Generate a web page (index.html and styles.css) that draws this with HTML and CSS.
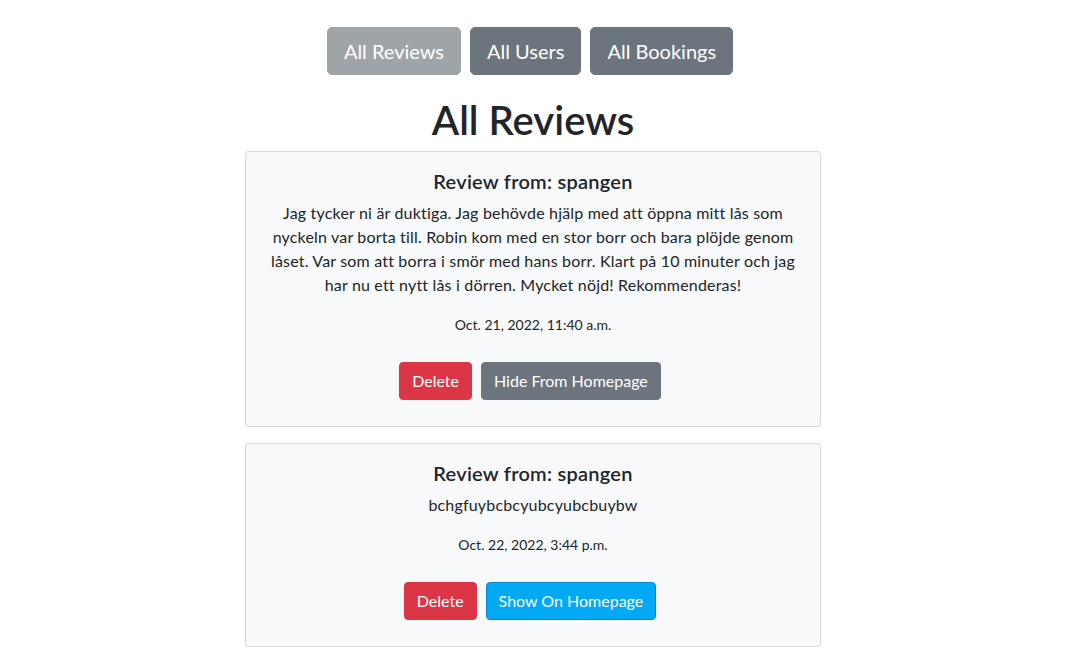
FILE: index.html
```html
<!DOCTYPE html>
<html lang="sv">
<head>
<meta charset="utf-8">
<title>All Reviews</title>
<link rel="stylesheet" href="styles.css">
</head>
<body>
<div class="page">
  <nav class="nav">
    <a class="btn btn-lg btn-disabled">All Reviews</a>
    <a class="btn btn-lg btn-secondary">All Users</a>
    <a class="btn btn-lg btn-secondary">All Bookings</a>
  </nav>
  <h1 class="heading">All Reviews</h1>
  <div class="card">
    <h5 class="card-title">Review from: spangen</h5>
    <p class="card-text">Jag tycker ni är duktiga. Jag behövde hjälp med att öppna mitt lås som nyckeln var borta till. Robin kom med en stor borr och bara plöjde genom låset. Var som att borra i smör med hans borr. Klart på 10 minuter och jag har nu ett nytt lås i dörren. Mycket nöjd! Rekommenderas!</p>
    <p class="card-date">Oct. 21, 2022, 11:40 a.m.</p>
    <div class="actions">
      <a class="btn btn-danger">Delete</a>
      <a class="btn btn-secondary">Hide From Homepage</a>
    </div>
  </div>
  <div class="card">
    <h5 class="card-title">Review from: spangen</h5>
    <p class="card-text">bchgfuybcbcyubcyubcbuybw</p>
    <p class="card-date">Oct. 22, 2022, 3:44 p.m.</p>
    <div class="actions">
      <a class="btn btn-danger">Delete</a>
      <a class="btn btn-info">Show On Homepage</a>
    </div>
  </div>
</div>
</body>
</html>
```

FILE: styles.css
```css
* { box-sizing: border-box; }
body {
  margin: 0;
  font-family: Lato, "Liberation Sans", sans-serif;
  color: #212529;
  background: #fff;
}
.page {
  padding-right: 12px;
}
.nav {
  display: flex;
  justify-content: center;
  gap: 9px;
  padding-top: 27px;
  margin-right: 6px;
}
.btn {
  display: inline-block;
  color: #fff;
  text-decoration: none;
  border: 1px solid transparent;
  font-size: 16px;
  line-height: 24px;
  padding: 6px 12px;
  border-radius: 4px;
}
.btn-lg {
  font-size: 20px;
  line-height: 30px;
  padding: 8px 16px;
  border-radius: 5px;
}
.btn-secondary { background: #6c757d; border-color: #6c757d; }
.btn-disabled { background: #9fa4a8; border-color: #9fa4a8; }
.btn-danger { background: #dc3545; border-color: #dc3545; }
.btn-info { background: #03a9f4; border-color: #0288d1; }
.heading {
  margin: 21px 0 7px;
  text-align: center;
  font-size: 40px;
  line-height: 48px;
  font-weight: 600;
}
.card {
  width: 576px;
  margin: 0 auto 16px;
  background: #f8f9fa;
  border: 1px solid rgba(0, 0, 0, 0.125);
  border-radius: 4px;
  padding: 17px 16px 16px;
  text-align: center;
}
.card-title {
  margin: 0 0 8px;
  font-size: 20px;
  line-height: 24px;
  font-weight: 600;
  letter-spacing: 0.25px;
}
.card-text {
  margin: 0 0 16px;
  font-size: 16px;
  line-height: 24px;
  letter-spacing: 0.18px;
}
.card-date {
  margin: 0 0 25px;
  font-size: 14px;
  line-height: 24px;
}
.actions {
  display: flex;
  justify-content: center;
  gap: 9px;
  margin-bottom: 10px;
  padding-right: 6px;
}
```
